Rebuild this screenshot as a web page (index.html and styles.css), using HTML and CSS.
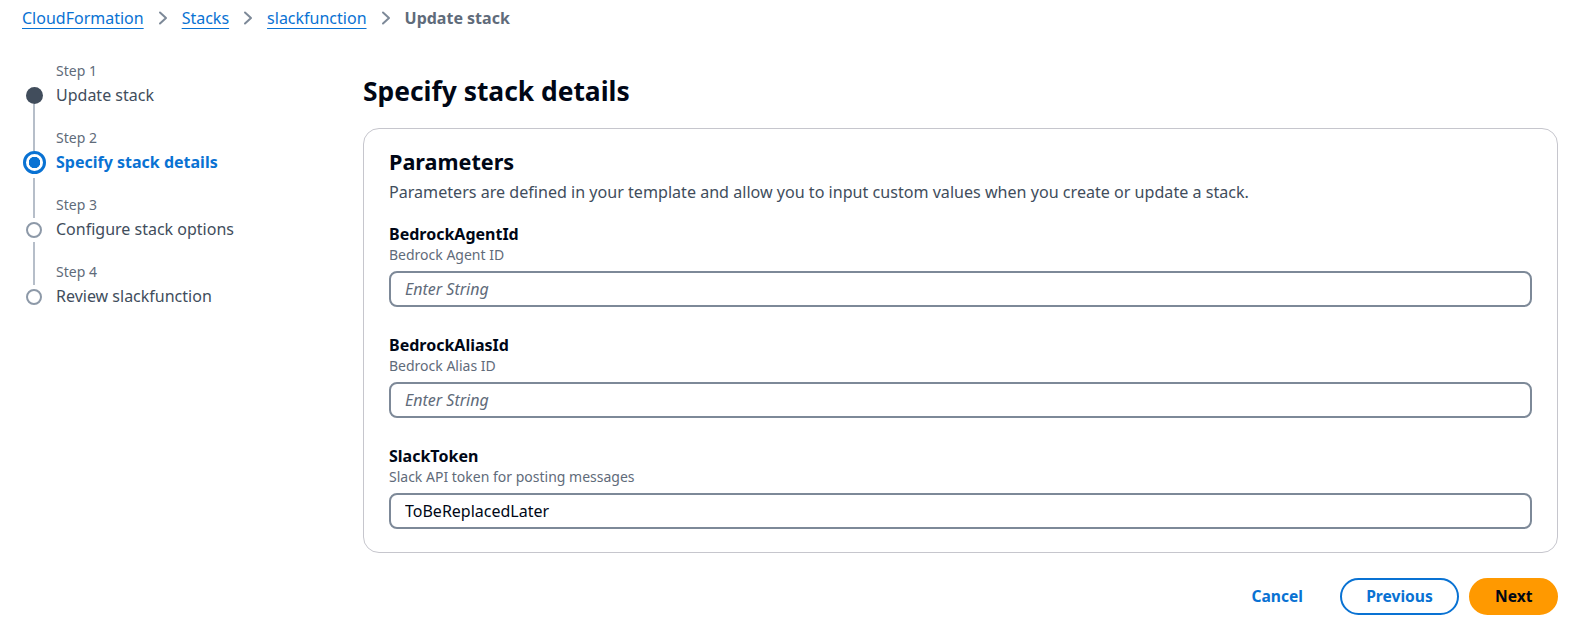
FILE: index.html
```html
<!DOCTYPE html>
<html lang="en">
<head>
<meta charset="utf-8">
<title>Update stack</title>
<link rel="stylesheet" href="styles.css">
</head>
<body>
<nav class="breadcrumbs">
  <a class="crumb" href="#">CloudFormation</a>
  <svg class="chev" viewBox="0 0 10 14" width="10" height="14"><path d="M2 1.5 L8 7 L2 12.5" fill="none" stroke="#7d8998" stroke-width="2" stroke-linecap="round" stroke-linejoin="round"/></svg>
  <a class="crumb" href="#">Stacks</a>
  <svg class="chev" viewBox="0 0 10 14" width="10" height="14"><path d="M2 1.5 L8 7 L2 12.5" fill="none" stroke="#7d8998" stroke-width="2" stroke-linecap="round" stroke-linejoin="round"/></svg>
  <a class="crumb" href="#">slackfunction</a>
  <svg class="chev" viewBox="0 0 10 14" width="10" height="14"><path d="M2 1.5 L8 7 L2 12.5" fill="none" stroke="#7d8998" stroke-width="2" stroke-linecap="round" stroke-linejoin="round"/></svg>
  <span class="crumb-current">Update stack</span>
</nav>

<div class="layout">
  <ol class="steps">
    <li class="step done">
      <div class="marker"><span class="seg top hidden"></span><span class="dot"></span><span class="seg bottom flush"></span></div>
      <div class="step-text"><div class="step-num">Step 1</div><div class="step-title">Update stack</div></div>
    </li>
    <li class="step active">
      <div class="marker"><span class="seg top"></span><span class="dot"></span><span class="seg bottom"></span></div>
      <div class="step-text"><div class="step-num">Step 2</div><div class="step-title">Specify stack details</div></div>
    </li>
    <li class="step">
      <div class="marker"><span class="seg top"></span><span class="dot"></span><span class="seg bottom"></span></div>
      <div class="step-text"><div class="step-num">Step 3</div><div class="step-title">Configure stack options</div></div>
    </li>
    <li class="step last">
      <div class="marker"><span class="seg top"></span><span class="dot"></span><span class="seg bottom hidden"></span></div>
      <div class="step-text"><div class="step-num">Step 4</div><div class="step-title">Review slackfunction</div></div>
    </li>
  </ol>

  <main class="main">
    <h1 class="page-title">Specify stack details</h1>
    <section class="container">
      <h2 class="container-title">Parameters</h2>
      <p class="container-desc">Parameters are defined in your template and allow you to input custom values when you create or update a stack.</p>
      <div class="fields">
        <div class="field">
          <div class="field-label">BedrockAgentId</div>
          <div class="field-desc">Bedrock Agent ID</div>
          <input class="input" type="text" placeholder="Enter String">
        </div>
        <div class="field">
          <div class="field-label">BedrockAliasId</div>
          <div class="field-desc">Bedrock Alias ID</div>
          <input class="input" type="text" placeholder="Enter String">
        </div>
        <div class="field">
          <div class="field-label">SlackToken</div>
          <div class="field-desc">Slack API token for posting messages</div>
          <input class="input" type="text" value="ToBeReplacedLater">
        </div>
      </div>
    </section>
    <div class="actions">
      <button class="btn btn-link">Cancel</button>
      <button class="btn btn-normal">Previous</button>
      <button class="btn btn-primary">Next</button>
    </div>
  </main>
</div>
</body>
</html>
```

FILE: styles.css
```css
* { box-sizing: border-box; }

html, body {
  margin: 0;
  padding: 0;
  background: #ffffff;
}

body {
  font-family: "Noto Sans", "Open Sans", sans-serif;
  color: #000716;
  font-size: 16px;
}

.breadcrumbs {
  display: flex;
  align-items: center;
  height: 35px;
  padding: 0 22px;
  gap: 14px;
}

.crumb {
  color: #0972d3;
  text-decoration: underline;
  text-underline-offset: 4px;
  text-decoration-thickness: 1px;
  font-size: 16px;
  line-height: 22px;
}

.chev { display: block; }

.crumb-current {
  color: #5f6b7a;
  font-weight: 700;
  font-size: 16px;
  line-height: 22px;
}

.layout {
  display: flex;
  align-items: flex-start;
}

.steps {
  list-style: none;
  margin: 0;
  padding: 26px 0 0 22px;
  width: 363px;
  flex: none;
}

.step {
  display: flex;
  gap: 10px;
  height: 67px;
}

.step.last { height: 48px; }

.marker {
  width: 24px;
  display: flex;
  flex-direction: column;
  align-items: center;
}

.seg {
  width: 2px;
  background: #b6bec9;
}

.seg.top {
  flex: none;
  height: 23px;
  margin-bottom: 4px;
}

.seg.bottom {
  flex: 1;
  margin-top: 4px;
}

.seg.bottom.flush { margin-top: 0; }

.seg.hidden { background: transparent; }

.step.done .seg.top { margin-bottom: 0; height: 26px; }
.step.active .seg.top { margin-bottom: 0; height: 23px; }

.dot {
  flex: none;
  width: 16px;
  height: 16px;
  border-radius: 50%;
  border: 2px solid #8d99a8;
  background: #fff;
}

.step.done .dot {
  width: 17px;
  height: 17px;
  border: none;
  background: #414d5c;
}

.step.active .dot {
  width: 23px;
  height: 23px;
  border: 3px solid #0972d3;
  background: radial-gradient(circle, #0972d3 0 5.5px, #ffffff 6px);
}

.step-num {
  font-size: 14px;
  line-height: 20px;
  color: #5f6b7a;
}

.step-title {
  margin-top: 2px;
  font-size: 16px;
  line-height: 24px;
  color: #414d5c;
  white-space: nowrap;
}

.step.active .step-title {
  color: #0972d3;
  font-weight: 700;
}

.main {
  flex: 1;
  margin-right: 25px;
  padding-top: 38px;
}

.page-title {
  margin: 0;
  font-size: 26.4px;
  line-height: 36px;
  font-weight: 700;
  color: #000716;
}

.container {
  margin-top: 19px;
  border: 1px solid #c6c6cd;
  border-radius: 16px;
  padding: 19px 25px 23px 25px;
}

.container-title {
  margin: 0;
  font-size: 21.6px;
  line-height: 28px;
  font-weight: 700;
}

.container-desc {
  margin: 5px 0 0 0;
  font-size: 16.1px;
  line-height: 22px;
  color: #414d5c;
}

.fields {
  margin-top: 20px;
  display: flex;
  flex-direction: column;
  gap: 27px;
}

.field {
  display: flex;
  flex-direction: column;
}

.field-label {
  font-size: 16px;
  line-height: 22px;
  font-weight: 700;
}

.field-desc {
  font-size: 14px;
  line-height: 20px;
  color: #5f6b7a;
}

.input {
  margin-top: 6px;
  height: 36px;
  width: 100%;
  border: 2px solid #7d8998;
  border-radius: 8px;
  padding: 0 14px;
  font-family: inherit;
  font-size: 16px;
  color: #000716;
  background: #fff;
  outline: none;
}

.input::placeholder {
  color: #5f6b7a;
  font-style: italic;
}

.actions {
  display: flex;
  justify-content: flex-end;
  align-items: center;
  gap: 10px;
  margin-top: 25px;
}

.btn {
  font-family: inherit;
  font-size: 15.6px;
  font-weight: 700;
  height: 37px;
  border-radius: 20px;
  padding: 0 24px;
  cursor: pointer;
  line-height: 1;
}

.btn-link {
  background: transparent;
  border: none;
  color: #0972d3;
  margin-right: 3px;
}

.btn-normal {
  background: #fff;
  border: 2px solid #0972d3;
  color: #0972d3;
  width: 119px;
}

.btn-primary {
  background: #ff9900;
  border: 2px solid #ff9900;
  color: #000716;
  width: 89px;
}
```
